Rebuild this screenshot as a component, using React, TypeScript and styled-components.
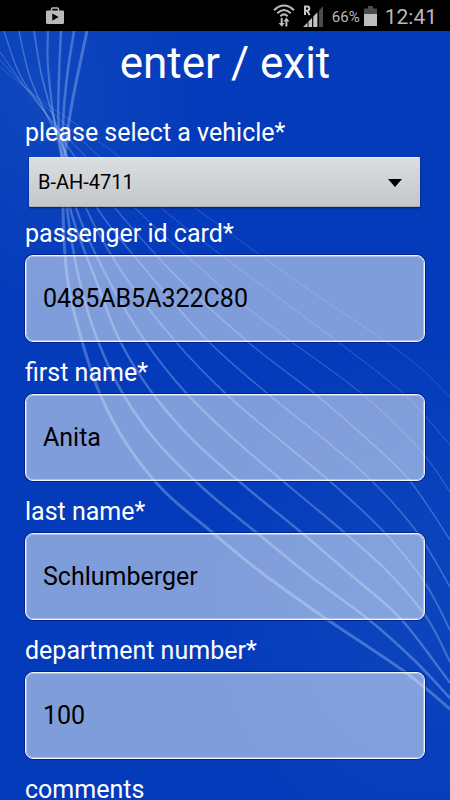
import React from "react";
import styled, { createGlobalStyle } from "styled-components";

const GlobalStyle = createGlobalStyle`
  *, *::before, *::after { box-sizing: border-box; }
  body {
    margin: 0;
    background: #043bba;
    font-family: Roboto, "Liberation Sans", sans-serif;
  }
`;

const Screen = styled.div`
  display: flex;
  flex-direction: column;
  height: 100vh;
  overflow: hidden;
`;

const StatusBar = styled.header`
  display: flex;
  align-items: center;
  flex: none;
  height: 31px;
  padding: 0 13px 0 46px;
  background: #000;
  color: #b9b9b9;

  svg { display: block; flex: none; }
`;

const StatusIcons = styled.div`
  display: flex;
  align-items: center;
  gap: 8px;
  margin-left: auto;
`;

const BatteryGroup = styled.div`
  display: flex;
  align-items: center;
  gap: 4px;
`;

const BatteryLevel = styled.span`
  font-size: 15px;
  line-height: 20px;
  padding-top: 2px;
`;

const Clock = styled.time`
  font-size: 21px;
  line-height: 24px;
  padding-top: 3px;
`;

const Stage = styled.div`
  position: relative;
  flex: 1;
  min-height: 0;
  background:
    radial-gradient(ellipse 150px 210px at 40px 60px, rgba(40, 100, 200, 0.3), transparent),
    radial-gradient(ellipse 200px 260px at 92% 74%, rgba(40, 100, 200, 0.25), transparent),
    #043bba;
`;

const Waves = styled.svg`
  position: absolute;
  inset: 0;
  width: 100%;
  height: 100%;
  pointer-events: none;
`;

const Scroller = styled.main`
  position: relative;
  height: 100%;
  overflow-y: auto;
  scrollbar-width: none;
  padding: 0 25px 25px;
`;

const Title = styled.h1`
  margin: 0 0 21px;
  font-size: 44px;
  line-height: 64px;
  font-weight: 400;
  text-align: center;
  color: #fff;
`;

const Form = styled.form`
  display: flex;
  flex-direction: column;
  gap: 10px;
`;

const FieldGroup = styled.div`
  display: flex;
  flex-direction: column;
  gap: 4px;
`;

const Label = styled.label`
  font-size: 25px;
  line-height: 34px;
  color: #fff;
`;

const SelectBox = styled.div`
  position: relative;
  margin: 3px 5px 0 4px;

  svg {
    position: absolute;
    right: 18px;
    top: 50%;
    margin-top: -3px;
    pointer-events: none;
  }
`;

const Select = styled.select`
  display: block;
  width: 100%;
  height: 50px;
  padding: 0 40px 0 9px;
  appearance: none;
  border: 0;
  border-top: 1px solid #e9ecee;
  border-bottom: 1px solid #aeb2b6;
  border-radius: 1px;
  background: linear-gradient(#dcdfe2, #c4c7ca);
  box-shadow: 0 1px 2px rgba(0, 0, 40, 0.6);
  font-family: inherit;
  font-size: 20px;
  color: #000;
`;

const Input = styled.input`
  display: block;
  width: 100%;
  height: 87px;
  margin: 0 0 4px;
  padding: 0 17px;
  border: 1px solid #f0f4fd;
  border-radius: 8px;
  background: rgba(252, 255, 252, 0.5);
  background-clip: padding-box;
  box-shadow:
    inset 0 0 0 1px rgba(255, 255, 255, 0.35),
    0 0 0 1px rgba(0, 0, 90, 0.45);
  font-family: inherit;
  font-size: 25px;
  color: #000;
`;

type Point = [number, number];

const strands: { width: number; opacity: number; points: Point[] }[] = [
  { width: 3, opacity: 0.33, points: [[87, 31], [73, 98], [66, 145], [63, 208], [68, 283], [82, 341], [100, 394], [126, 443], [163, 490], [213, 533], [258, 570], [325, 618], [405, 672], [450, 709]] },
  { width: 2.6, opacity: 0.33, points: [[74, 31], [67, 77], [63, 130], [67, 208], [80, 283], [98, 341], [123, 394], [157, 442], [204, 489], [257, 533], [310, 576], [368, 619], [414, 660], [450, 698]] },
  { width: 2.4, opacity: 0.33, points: [[61, 31], [59, 77], [59, 130], [70, 208], [97, 283], [120, 341], [153, 394], [195, 442], [247, 488], [302, 533], [352, 576], [401, 619], [450, 683]] },
  { width: 2.2, opacity: 0.31, points: [[48, 31], [48, 67], [56, 130], [76, 208], [106, 275], [145, 341], [187, 394], [235, 440], [290, 487], [345, 533], [390, 574], [427, 618], [450, 662]] },
  { width: 1.8, opacity: 0.31, points: [[34, 31], [42, 77], [56, 125], [86, 208], [124, 275], [175, 341], [225, 393], [280, 440], [333, 484], [385, 533], [425, 583], [450, 630]] },
  { width: 1.5, opacity: 0.31, points: [[19, 31], [30, 77], [54, 130], [97, 208], [150, 275], [208, 341], [268, 394], [325, 440], [372, 481], [417, 532], [450, 587]] },
  { width: 1.3, opacity: 0.31, points: [[4, 31], [20, 75], [47, 115], [75, 157], [115, 208], [175, 275], [248, 342], [315, 394], [368, 440], [410, 481], [450, 540]] },
  { width: 1, opacity: 0.31, points: [[0, 52], [27, 90], [53, 122], [86, 157], [135, 208], [180, 250], [235, 298], [292, 342], [362, 394], [420, 450], [450, 492]] },
  { width: 0.9, opacity: 0.28, points: [[0, 60], [33, 95], [68, 127], [100, 157], [161, 208], [225, 258], [338, 342], [405, 395], [450, 445]] },
  { width: 0.8, opacity: 0.24, points: [[0, 67], [37, 97], [80, 127], [120, 157], [195, 208], [253, 250], [318, 296], [385, 341], [425, 372], [450, 398]] },
];

// Smooth Catmull-Rom curve through every point of a strand.
const smoothPath = (points: Point[]) =>
  points.slice(1).reduce((path, end, i) => {
    const start = points[i];
    const before = points[i - 1] ?? start;
    const after = points[i + 2] ?? end;
    const x1 = start[0] + (end[0] - before[0]) / 6;
    const y1 = start[1] + (end[1] - before[1]) / 6;
    const x2 = end[0] - (after[0] - start[0]) / 6;
    const y2 = end[1] - (after[1] - start[1]) / 6;
    return `${path} C${x1} ${y1} ${x2} ${y2} ${end[0]} ${end[1]}`;
  }, `M${points[0][0]} ${points[0][1]}`);

const WaveBackground = () => (
  <Waves viewBox="0 31 450 769" preserveAspectRatio="xMidYMin slice" aria-hidden="true">
    {strands.map((strand) => (
      <path
        key={strand.width}
        d={smoothPath(strand.points)}
        fill="none"
        stroke="#b9d3ff"
        strokeWidth={strand.width}
        strokeOpacity={strand.opacity}
      />
    ))}
  </Waves>
);

const StoreIcon = () => (
  <svg width="18" height="18" viewBox="0 0 18 18" aria-hidden="true">
    <path d="M5.5 4V2.2Q5.5 1 6.7 1h4.6q1.200 0 1.200 1.200V4" fill="none" stroke="#b9b9b9" strokeWidth="1.500" />
    <path fillRule="evenodd" d="M1 3.500h16q1 0 1 1V15.500q0 1.500-1.500 1.500h-15Q0 17 0 15.500V4.500q0-1 1-1zM6.300 6.500v7.200L12.600 10z" fill="#b9b9b9" />
  </svg>
);

const WifiIcon = () => (
  <svg width="22" height="23" viewBox="0 0 22 23" aria-hidden="true">
    <g fill="none" stroke="#bdbdbd" strokeWidth="2">
      <path d="M1 6.300Q11-3.200 21 6.300" />
      <path d="M4.300 9.300Q11 2.800 17.700 9.300" />
      <path d="M7.400 12.200Q11 8.600 14.600 12.200" />
    </g>
    <path d="M7.700 14h2v5h2L8.700 22.800 5.600 19h2.100zM12.400 22.500h2v-5h2L13.400 13.600 10.400 17.500h2z" fill="#bdbdbd" />
  </svg>
);

const SignalIcon = () => (
  <svg width="21" height="22" viewBox="0 0 21 22" aria-hidden="true">
    <path d="M2 10V1.500h2.300q2 0 2 2.100t-2 2.100H2M4.200 5.700l2.400 4.300" fill="none" stroke="#c8c8c8" strokeWidth="2" />
    <path d="M0 22l4.500-4.600V22zM5.500 16.400l3.600-3.700V22H5.500zM10.300 11.500L14.400 7.300V22h-4.100z" fill="#c4c4c4" />
    <path d="M16 5.500L20 1.300V22h-4z" fill="#4c4c4c" />
  </svg>
);

const BatteryIcon = () => (
  <svg width="13" height="20" viewBox="0 0 13 20" aria-hidden="true">
    <path d="M4 0h5v2.500h4V8H0V2.500h4z" fill="#4c4c4c" />
    <path d="M0 8h13v12H0z" fill="#bdbdbd" />
  </svg>
);

const Caret = () => (
  <svg width="14" height="8" viewBox="0 0 14 8" aria-hidden="true">
    <path d="M0 0h14L7 8z" fill="#000" />
  </svg>
);

const textFields = [
  { id: "card", label: "passenger id card*", value: "0485AB5A322C80" },
  { id: "first", label: "first name*", value: "Anita" },
  { id: "last", label: "last name*", value: "Schlumberger" },
  { id: "department", label: "department number*", value: "100" },
  { id: "comments", label: "comments", value: "" },
];

export default function App() {
  return (
    <Screen>
      <GlobalStyle />
      <StatusBar>
        <StoreIcon />
        <StatusIcons>
          <WifiIcon />
          <SignalIcon />
          <BatteryGroup>
            <BatteryLevel>66%</BatteryLevel>
            <BatteryIcon />
          </BatteryGroup>
          <Clock>12:41</Clock>
        </StatusIcons>
      </StatusBar>
      <Stage>
        <WaveBackground />
        <Scroller>
          <Title>enter / exit</Title>
          <Form>
            <FieldGroup>
              <Label htmlFor="vehicle">please select a vehicle*</Label>
              <SelectBox>
                <Select id="vehicle" defaultValue="B-AH-4711">
                  <option>B-AH-4711</option>
                </Select>
                <Caret />
              </SelectBox>
            </FieldGroup>
            {textFields.map((field) => (
              <FieldGroup key={field.id}>
                <Label htmlFor={field.id}>{field.label}</Label>
                <Input id={field.id} type="text" defaultValue={field.value} />
              </FieldGroup>
            ))}
          </Form>
        </Scroller>
      </Stage>
    </Screen>
  );
}
